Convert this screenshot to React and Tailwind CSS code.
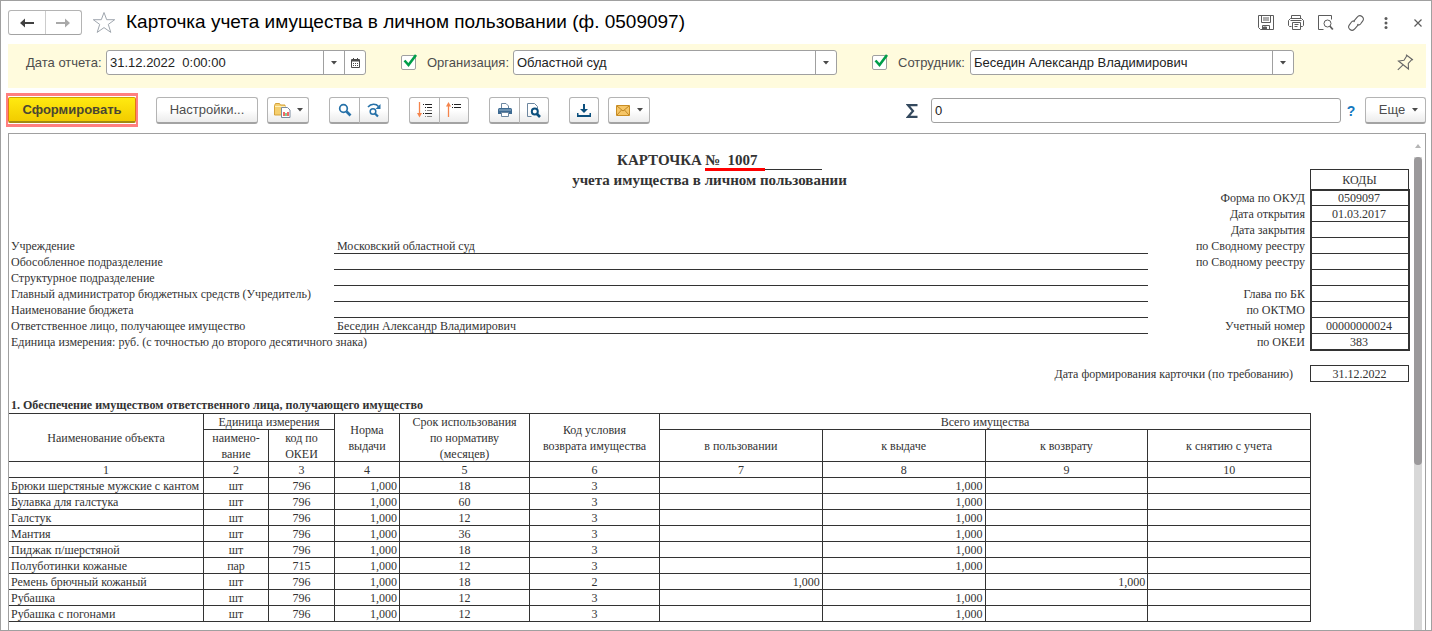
import { clsx } from 'clsx'

const rows = [
  ['Брюки шерстяные мужские с кантом', 'шт', '796', '1,000', '18', '3', '', '1,000', '', ''],
  ['Булавка для галстука', 'шт', '796', '1,000', '60', '3', '', '1,000', '', ''],
  ['Галстук', 'шт', '796', '1,000', '12', '3', '', '1,000', '', ''],
  ['Мантия', 'шт', '796', '1,000', '36', '3', '', '1,000', '', ''],
  ['Пиджак п/шерстяной', 'шт', '796', '1,000', '18', '3', '', '1,000', '', ''],
  ['Полуботинки кожаные', 'пар', '715', '1,000', '12', '3', '', '1,000', '', ''],
  ['Ремень брючный кожаный', 'шт', '796', '1,000', '18', '2', '1,000', '', '1,000', ''],
  ['Рубашка', 'шт', '796', '1,000', '12', '3', '', '1,000', '', ''],
  ['Рубашка с погонами', 'шт', '796', '1,000', '12', '3', '', '1,000', '', ''],
]

const columnAlign = [
  'text-left pl-0.5',
  'text-center',
  'text-center',
  'text-right pr-0.5',
  'text-center',
  'text-center',
  'text-right pr-0.5',
  'text-right pr-0.5',
  'text-right pr-0.5',
  'text-right pr-0.5',
]

const details = [
  ['Учреждение', 'Московский областной суд'],
  ['Обособленное подразделение', ''],
  ['Структурное подразделение', ''],
  ['Главный администратор бюджетных средств (Учредитель)', ''],
  ['Наименование бюджета', ''],
  ['Ответственное лицо, получающее имущество', 'Беседин Александр Владимирович'],
]

const codes = [
  ['Форма по ОКУД', '0509097'],
  ['Дата открытия', '01.03.2017'],
  ['Дата закрытия', ''],
  ['по Сводному реестру', ''],
  ['по Сводному реестру', ''],
  ['', ''],
  ['Глава по БК', ''],
  ['по ОКТМО', ''],
  ['Учетный номер', '00000000024'],
  ['по ОКЕИ', '383'],
]

function Caret() {
  return (
    <svg width="6" height="4" viewBox="0 0 6 4" fill="#4a4a4a" aria-hidden="true">
      <path d="M0 0h6L3 3.5z" />
    </svg>
  )
}

function ToolButton({ label, className, children }) {
  return (
    <button
      type="button"
      aria-label={label}
      className={clsx(
        'flex h-[27px] items-center justify-center bg-linear-to-b from-white from-50% to-[#ececec] border border-[#b4b4b4] border-b-2 border-b-[#a3a3a3]',
        className
      )}
    >
      {children}
    </button>
  )
}

function CheckBox({ id }) {
  return (
    <span className="relative h-4 w-4">
      <input
        id={id}
        type="checkbox"
        defaultChecked
        className="peer block h-[15px] w-[15px] appearance-none rounded-xs border border-[#a0a0a0] bg-white"
      />
      <svg
        className="pointer-events-none absolute -top-px left-0 hidden peer-checked:block"
        width="17"
        height="14"
        viewBox="0 0 17 14"
        fill="none"
        aria-hidden="true"
      >
        <path d="M3.500 6.500l4 4.500L15 1" stroke="#009e49" strokeWidth="2.600" />
      </svg>
    </span>
  )
}

function SelectField({ id, value }) {
  return (
    <div className="relative h-[25px] w-[324px]">
      <select
        id={id}
        defaultValue={value}
        className="h-full w-full appearance-none rounded-[3px] border border-[#a0a0a0] bg-white pl-[3px] pr-6 text-[#222]"
      >
        <option>{value}</option>
      </select>
      <span className="pointer-events-none absolute inset-y-px right-px flex w-[21px] items-center justify-center border-l border-[#a0a0a0]">
        <Caret />
      </span>
    </div>
  )
}

function IconButton({ label, children }) {
  return (
    <button type="button" aria-label={label} className="flex h-5 w-5 items-center justify-center text-[#5c5c5c]">
      {children}
    </button>
  )
}

function TitleBar() {
  return (
    <header className="flex h-[43px] items-center">
      <div className="flex h-[25px] w-[74px] rounded-[3px] border border-[#b4b4b4] border-b-[#a3a3a3]">
        <button type="button" aria-label="Назад" className="flex flex-1 items-center justify-center border-r border-[#ccc]">
          <svg width="14" height="10" viewBox="0 0 14 10" aria-hidden="true">
            <path d="M0 5l5-4.500v3.500h9v2H5v3.500z" fill="#404040" />
          </svg>
        </button>
        <button type="button" aria-label="Вперед" className="flex flex-1 items-center justify-center">
          <svg width="14" height="10" viewBox="0 0 14 10" aria-hidden="true">
            <path d="M14 5L9 .5v3.500H0v2h9v3.500z" fill="#a9a9a9" />
          </svg>
        </button>
      </div>
      <button type="button" aria-label="В избранное" className="ml-[10px]">
        <svg width="24" height="23" viewBox="0 0 24 23" fill="none" stroke="#9fa6ae" aria-hidden="true">
          <path d="M12 1.500l2.700 7.200h8l-6.400 4.700 2.500 8L12 16.600l-6.800 4.800 2.500-8L1.300 8.700h8z" />
        </svg>
      </button>
      <h1 className="ml-[10px] text-[19px] text-black">Карточка учета имущества в личном пользовании (ф. 0509097)</h1>
      <div className="ml-auto flex items-center gap-[10px]">
        <IconButton label="Сохранить">
          <svg width="16" height="16" viewBox="0 0 16 16" fill="none" stroke="currentColor" aria-hidden="true">
            <path d="M.5.5h15v14h-13l-2-2z" />
            <path d="M3.500.5v7h9v-7M5 3h6M5 5h6M4.500 14.500v-4h7v4" />
            <path d="M5.500 12h3v2.500h-3z" fill="currentColor" />
          </svg>
        </IconButton>
        <IconButton label="Печать">
          <svg width="16" height="16" viewBox="0 0 16 16" fill="none" stroke="currentColor" aria-hidden="true">
            <path d="M3.500 3.500v-3h9v3M3.500 11.500h-2l-1-1v-5l2-2h11l2 2v5l-1 1h-2M2.500 5.500h11" />
            <path d="M4.500 7.500h8v7h-8zM6.500 9.500h4M6.500 11.500h3" />
          </svg>
        </IconButton>
        <IconButton label="Предварительный просмотр">
          <svg width="16" height="16" viewBox="0 0 16 16" fill="none" stroke="currentColor" aria-hidden="true">
            <path d="M5.500 14.500h-5V.5h13v4" />
            <circle cx="9.500" cy="8.500" r="3.500" />
            <path d="M11.800 11l3 3.500" strokeWidth="1.800" />
          </svg>
        </IconButton>
        <IconButton label="Ссылка">
          <svg width="16" height="16" viewBox="0 0 16 16" fill="none" stroke="currentColor" strokeWidth="1.100" aria-hidden="true">
            <path d="M6.300 7.200l-.3-1.200L9 2.300C10.500.5 12.300.2 14 1.500s1.900 3 .6 4.700L12.500 9c-.8 1-1.800 1.200-2.800.8" />
            <path d="M9.700 8.800l.3 1.200L7 13.700c-1.500 1.800-3.300 2.100-5 .8s-1.900-3-.6-4.700L3.500 7c.8-1 1.800-1.200 2.800-.8" />
          </svg>
        </IconButton>
        <IconButton label="Дополнительно">
          <svg width="4" height="12" viewBox="0 0 4 12" fill="currentColor" aria-hidden="true">
            <circle cx="2" cy="1.500" r="1.500" />
            <circle cx="2" cy="6" r="1.500" />
            <circle cx="2" cy="10.500" r="1.500" />
          </svg>
        </IconButton>
        <IconButton label="Закрыть">
          <svg className="ml-1" width="8" height="8" viewBox="0 0 8 8" fill="none" stroke="currentColor" strokeWidth="1.200" aria-hidden="true">
            <path d="M.5.5l7 7M7.500.5l-7 7" />
          </svg>
        </IconButton>
      </div>
    </header>
  )
}

function Filters() {
  return (
    <div className="flex h-11 items-start bg-[#fffbdd] pt-[6px] pl-[18px] pr-3">
      <div className="flex h-[25px] items-center">
        <label htmlFor="report-date" className="w-20">Дата отчета:</label>
        <div className="flex h-full w-[260px] overflow-hidden rounded-[3px] border border-[#a0a0a0] bg-white">
          <input id="report-date" type="text" defaultValue="31.12.2022  0:00:00" className="min-w-0 flex-1 pl-[3px] whitespace-pre text-[#222]" />
          <button type="button" aria-label="Выбрать из списка" className="flex w-[21px] items-center justify-center border-l border-[#a0a0a0]">
            <Caret />
          </button>
          <button type="button" aria-label="Календарь" className="flex w-[21px] items-center justify-center border-l border-[#a0a0a0]">
            <svg width="9" height="10" viewBox="0 0 9 10" aria-hidden="true">
              <path d="M.5 1.500h8v8h-8z" fill="none" stroke="#4a4a4a" />
              <path d="M1 2h7v1.500H1zM2 0h1v2H2zM6 0h1v2H6zM2 5h1v1H2zM4 5h1v1H4zM6 5h1v1H6zM2 7h1v1H2zM4 7h1v1H4zM6 7h1v1H6z" fill="#4a4a4a" />
            </svg>
          </button>
        </div>
      </div>
      <div className="ml-[35px] flex h-[25px] items-center">
        <CheckBox id="use-org" />
        <label htmlFor="use-org" className="ml-[10px] w-[86px]">Организация:</label>
        <SelectField id="org" value="Областной суд" />
      </div>
      <div className="ml-[35px] flex h-[25px] items-center">
        <CheckBox id="use-employee" />
        <label htmlFor="use-employee" className="ml-[10px] w-[72px]">Сотрудник:</label>
        <SelectField id="employee" value="Беседин Александр Владимирович" />
      </div>
      <button type="button" aria-label="Закрепить" className="mt-1 ml-auto">
        <svg width="17" height="17" viewBox="0 0 17 17" fill="none" stroke="#666" strokeWidth="1.100" aria-hidden="true">
          <path d="M9 .8l7 5.200M10 1.500L7 6.200l-5.500.8 10 8-.2-5.500L15 5.300M6 10.800L.8 15.800" />
        </svg>
      </button>
    </div>
  )
}

function Toolbar() {
  return (
    <div className="flex h-[45px] items-center">
      <div className="mb-px -ml-0.5 border-x-2 border-y-3 border-[#ff7f7f] py-px">
        <button
          type="button"
          className="block h-[26px] w-32 rounded-[2px] border border-x-[#e07a10] border-t-[#cda400] border-b-2 border-b-[#a08a10] bg-linear-to-b from-[#ffea10] to-[#f2cc00] font-bold text-[#4a4632]"
        >
          Сформировать
        </button>
      </div>
      <ToolButton className="ml-[18px] w-[102px] rounded-[3px]">Настройки...</ToolButton>
      <ToolButton label="Варианты отчета" className="ml-[9px] w-[42px] gap-[6px] rounded-[3px]">
        <svg width="17" height="16" viewBox="0 0 17 16" aria-hidden="true">
          <path d="M.5 3.500l1-2h4l1 1.500h4.500v10H.5z" fill="#f5cf6e" stroke="#d5a23a" />
          <path d="M1 4.500h10" stroke="#fff0b8" />
          <path d="M7.500 5.500h6l2.500 2.500v7.500H7.500z" fill="#fff" stroke="#7a8ba0" />
          <path d="M10 10v4" stroke="#e33" strokeWidth="1.500" />
          <path d="M12 11v3" stroke="#3a4" strokeWidth="1.200" />
          <path d="M14 10v4" stroke="#e33" strokeWidth="1.500" />
        </svg>
        <Caret />
      </ToolButton>
      <div className="ml-5 flex">
        <ToolButton label="Найти" className="w-[31px] rounded-l-[3px]">
          <svg width="14" height="14" viewBox="0 0 14 14" fill="none" stroke="#2671a8" aria-hidden="true">
            <circle cx="5.500" cy="5.500" r="3.800" strokeWidth="1.700" />
            <path d="M8.500 8.500l4 4" strokeWidth="2.600" />
          </svg>
        </ToolButton>
        <ToolButton label="Найти далее" className="-ml-px w-[30px] rounded-r-[3px]">
          <svg width="15" height="15" viewBox="0 0 15 15" fill="none" stroke="#2671a8" aria-hidden="true">
            <circle cx="6" cy="8.500" r="2.800" strokeWidth="1.500" />
            <path d="M8 10.500l3 3" strokeWidth="2.200" />
            <path d="M1 4c3-3.500 8-3.500 10.500-.5" strokeWidth="1.600" />
            <path d="M13.500 1v5H8.500z" fill="#2671a8" stroke="none" />
          </svg>
        </ToolButton>
      </div>
      <div className="ml-5 flex">
        <ToolButton label="Развернуть все" className="w-[31px] rounded-l-[3px]">
          <svg width="16" height="16" viewBox="0 0 16 16" fill="none" aria-hidden="true">
            <path d="M2.500 0v13" stroke="#f4844c" strokeWidth="1.300" />
            <path d="M0 11h5l-2.500 4.500z" fill="#f4844c" />
            <path d="M6 2.500h1M8 2.500h7M8 5.500h1M10 5.500h5M6 11.500h1M8 11.500h7" stroke="#222" />
            <path d="M8 8.500h1M10 8.500h5M8 14.500h1M10 14.500h5" stroke="#888" />
          </svg>
        </ToolButton>
        <ToolButton label="Свернуть все" className="-ml-px w-[30px] rounded-r-[3px]">
          <svg width="16" height="16" viewBox="0 0 16 16" fill="none" aria-hidden="true">
            <path d="M2.500 3v12" stroke="#f4844c" strokeWidth="1.300" />
            <path d="M0 4.500h5L2.500 0z" fill="#f4844c" />
            <path d="M6 2.500h1M8 2.500h7M8 5.500h7M6 5.500h1" stroke="#222" />
          </svg>
        </ToolButton>
      </div>
      <div className="ml-5 flex">
        <ToolButton label="Печать" className="w-[31px] rounded-l-[3px]">
          <svg width="14" height="14" viewBox="0 0 14 14" aria-hidden="true">
            <path d="M3.500 6V.5h4.500l2.500 2.500v3" fill="#fff" stroke="#6d87a0" />
            <path d="M0 6.500Q0 5 1.500 5h11Q14 5 14 6.500V11H0z" fill="#3d6a92" />
            <path d="M1 7h12" stroke="#9db8cf" />
            <path d="M3.500 9.500h7v4h-7z" fill="#fff" stroke="#6d87a0" />
          </svg>
        </ToolButton>
        <ToolButton label="Предварительный просмотр" className="-ml-px w-[30px] rounded-r-[3px]">
          <svg width="14" height="15" viewBox="0 0 14 15" fill="none" aria-hidden="true">
            <path d="M4.500 13.500h-4V.5h7l3 3v2" stroke="#6d87a0" />
            <circle cx="7.800" cy="8.500" r="3" stroke="#0b4f7d" strokeWidth="2" />
            <path d="M10 11l3 3" stroke="#0b4f7d" strokeWidth="2.600" />
          </svg>
        </ToolButton>
      </div>
      <ToolButton label="Сохранить" className="ml-5 w-[30px] rounded-[3px]">
        <svg width="14" height="13" viewBox="0 0 14 13" fill="#0b4f7d" aria-hidden="true">
          <path d="M6 0h2v5h3L7 9 3 5h3zM0 9h1.500v2h11V9H14v4H0z" />
        </svg>
      </ToolButton>
      <ToolButton label="Отправить по почте" className="ml-[9px] w-[42px] gap-[7px] rounded-[3px]">
        <svg width="14" height="11" viewBox="0 0 14 11" aria-hidden="true">
          <path d="M.5.5h13v10H.5z" fill="#f6c667" stroke="#c98d24" />
          <path d="M1 1l6 5 6-5M1 10l4.500-5M13 10L8.500 5" fill="none" stroke="#b97f1e" strokeWidth=".9" />
        </svg>
        <Caret />
      </ToolButton>
      <div className="ml-auto flex w-[520px] items-center">
        <label htmlFor="sum" aria-label="Сумма">
          <svg width="12" height="14" viewBox="0 0 12 14" fill="none" stroke="#34495e" strokeWidth="2.200" aria-hidden="true">
            <path d="M11.500 1.200H2L7 7l-5 5.800h9.500" />
          </svg>
        </label>
        <input id="sum" type="text" defaultValue="0" className="ml-[13px] h-[25px] min-w-0 flex-1 rounded-[3px] border border-[#a0a0a0] bg-white pl-[3px] text-[#222]" />
        <button type="button" aria-label="Справка" className="w-6 pr-1 text-center text-sm font-bold text-[#1478be]">?</button>
        <ToolButton className="w-[61px] gap-[7px] rounded-[3px] pl-[6px]">
          Еще
          <Caret />
        </ToolButton>
      </div>
    </div>
  )
}

function FormHeader() {
  return (
    <section className="flex items-end">
      <dl className="flex-1">
        {details.map(([label, value]) => (
          <div key={label} className="flex h-4">
            <dt className="w-[325px] pl-0.5">{label}</dt>
            <dd className="flex-1 border-b border-[#333] pl-[3px]">{value}</dd>
          </div>
        ))}
        <div className="h-4 pl-0.5">Единица измерения: руб. (с точностью до второго десятичного знака)</div>
      </dl>
      <div className="flex w-[262px] items-end">
        <div className="flex-1 pr-[5px] text-right">
          {codes.map(([label], i) => (
            <div key={i} className="h-4">{label}</div>
          ))}
        </div>
        <div className="w-[100px] text-center">
          <div className="mr-px flex h-5 items-center justify-center border border-b-0 border-[#333]">КОДЫ</div>
          <div className="-mb-px border-2 border-[#333]">
            {codes.map(([, value], i) => (
              <div key={i} className="h-4 border-b border-[#333] pr-0.5 leading-4 first:h-[15px] first:leading-[15px] last:h-[15px] last:border-b-0">
                {value}
              </div>
            ))}
          </div>
        </div>
      </div>
    </section>
  )
}

function PropertyTable() {
  const cell = 'border-r border-b border-[#333] p-0 font-normal'
  const line = 'pt-px leading-[14px]'
  return (
    <table className="w-full table-fixed border-separate border-spacing-0 border-t border-[#333]">
      <colgroup>
        <col className="w-[195px]" />
        <col className="w-[65px]" />
        <col className="w-[66px]" />
        <col className="w-[65px]" />
        <col className="w-[130px]" />
        <col className="w-[130px]" />
        <col />
        <col />
        <col />
        <col />
      </colgroup>
      <thead>
        <tr className="h-4">
          <th rowSpan={2} className={cell}>Наименование объекта</th>
          <th colSpan={2} className={clsx('border-r border-b border-[#333] font-normal', line)}>Единица измерения</th>
          <th rowSpan={2} className={cell}>Норма<br />выдачи</th>
          <th rowSpan={2} className={cell}>
            <div className="h-[47px]">Срок использования<br />по нормативу<br />(месяцев)</div>
          </th>
          <th rowSpan={2} className={cell}>Код условия<br />возврата имущества</th>
          <th colSpan={4} className={clsx('border-r border-b border-[#333] font-normal', line)}>Всего имущества</th>
        </tr>
        <tr className="h-8">
          <th className={cell}>
            <div className="h-[31px]">наимено-<br />вание</div>
          </th>
          <th className={cell}>
            <div className="h-[31px]">код по<br />ОКЕИ</div>
          </th>
          <th className={cell}>в пользовании</th>
          <th className={cell}>к выдаче</th>
          <th className={cell}>к возврату</th>
          <th className={cell}>к снятию с учета</th>
        </tr>
        <tr className="h-4">
          {columnAlign.map((_, i) => (
            <th key={i} className={clsx('border-r border-b border-[#333] font-normal', line)}>{i + 1}</th>
          ))}
        </tr>
      </thead>
      <tbody>
        {rows.map((row) => (
          <tr key={row[0]} className="h-4">
            {row.map((value, i) => (
              <td key={i} className={clsx('border-r border-b border-[#333] whitespace-nowrap', line, columnAlign[i])}>
                {value}
              </td>
            ))}
          </tr>
        ))}
      </tbody>
    </table>
  )
}

function ScrollBar() {
  return (
    <div className="flex w-[11px] flex-col items-start pt-[10px]" aria-hidden="true">
      <svg className="ml-px" width="6" height="4" viewBox="0 0 6 4" fill="#b5b5b5">
        <path d="M0 4h6L3 0z" />
      </svg>
      <div className="mt-[9px] w-2 flex-1 bg-[#d8d8d8]">
        <div className="h-[308px] rounded-full bg-[#9b999b]" />
      </div>
    </div>
  )
}

function Report() {
  return (
    <main className="flex flex-1 border border-b-0 border-[#a0a0a0] font-['Liberation_Serif',serif] text-xs leading-4 text-[#333]">
      <div className="flex-1 pt-4 pr-1">
        <div className="h-[19px]">
          <h2 className="flex justify-center pl-5 text-[15px] leading-5 font-bold">
            КАРТОЧКА
            <span className="relative ml-[3px] h-5 w-[117px] border-b border-[#333] whitespace-pre">
              №  1007
              <span className="absolute -bottom-0.5 left-0 h-[3px] w-[60px] bg-[#f00]" />
            </span>
          </h2>
          <p className="text-center text-[15px] leading-5 font-bold">учета имущества в личном пользовании</p>
        </div>
        <FormHeader />
        <div className="mt-[15px] flex items-center justify-end">
          <span>Дата формирования карточки (по требованию)</span>
          <span className="mr-px ml-[17px] h-[17px] w-[99px] border border-[#333] text-center leading-4">31.12.2022</span>
        </div>
        <h3 className="mt-[15px] pl-0.5 font-bold">1. Обеспечение имуществом ответственного лица, получающего имущество</h3>
        <div className="pr-[99px]">
          <PropertyTable />
        </div>
      </div>
      <ScrollBar />
    </main>
  )
}

export default function App() {
  return (
    <div className="flex min-h-screen flex-col border border-[#a0a0a0] bg-white pr-[5px] pl-[7px] font-['Liberation_Sans',Arial,sans-serif] text-[13px] text-[#4d4d4d]">
      <TitleBar />
      <Filters />
      <Toolbar />
      <Report />
    </div>
  )
}
